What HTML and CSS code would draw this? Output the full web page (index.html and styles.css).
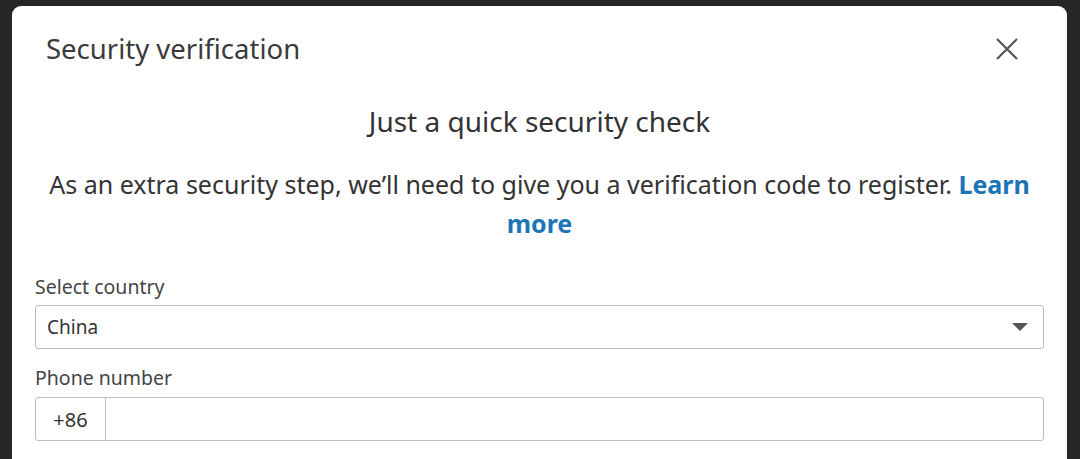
FILE: index.html
```html
<!DOCTYPE html>
<html lang="en">
<head>
<meta charset="utf-8">
<title>Security verification</title>
<link rel="stylesheet" href="styles.css">
</head>
<body>
<div class="dialog">
  <header class="dialog-header">
    <h1 class="dialog-title">Security verification</h1>
    <button class="close-btn" aria-label="Close">
      <svg width="24" height="24" viewBox="0 0 24 24"><path d="M2 2 L22 22 M22 2 L2 22" stroke="#555" stroke-width="2.2" fill="none"/></svg>
    </button>
  </header>
  <div class="dialog-body">
    <h2 class="subtitle">Just a quick security check</h2>
    <p class="intro">As an extra security step, we’ll need to give you a verification code to register. <a class="link" href="#">Learn more</a></p>
    <label class="field-label">Select country</label>
    <div class="select-box">
      <span class="select-value">China</span>
      <span class="caret"></span>
    </div>
    <label class="field-label">Phone number</label>
    <div class="phone-box">
      <span class="prefix">+86</span>
      <span class="phone-input"></span>
    </div>
  </div>
</div>
</body>
</html>
```

FILE: styles.css
```css
* { box-sizing: border-box; }
html, body {
  margin: 0;
  height: 100%;
  background: #262626;
  overflow: hidden;
}
body {
  padding: 6px 13px 0 12px;
  font-family: "Noto Sans", "Open Sans", sans-serif;
  color: #333;
}
.dialog {
  background: #fff;
  border-radius: 9px 9px 0 0;
  height: 470px;
}
.dialog-header {
  display: flex;
  justify-content: space-between;
  align-items: flex-start;
  padding: 24px 48px 0 34px;
  height: 72px;
}
.dialog-title {
  margin: 0;
  font-size: 27.5px;
  font-weight: 400;
  line-height: 38px;
  color: #3a3a3a;
}
.close-btn {
  border: 0;
  background: none;
  padding: 0;
  margin-top: 7px;
  width: 24px;
  height: 24px;
  display: flex;
}
.dialog-body {
  padding: 0 23px 0 23px;
}
.subtitle {
  margin: 25px 0 0;
  text-align: center;
  font-size: 28px;
  font-weight: 400;
  line-height: 36px;
  color: #333;
}
.intro {
  margin: 26px 0 0;
  text-align: center;
  font-size: 25px;
  line-height: 39px;
  color: #333;
}
.link {
  color: #1a74b6;
  font-weight: 700;
  text-decoration: none;
}
.field-label {
  display: block;
  margin-top: 32px;
  font-size: 19.5px;
  line-height: 24px;
  color: #444;
}
.select-box + .field-label { margin-top: 17px; }
.select-box {
  margin-top: 6px;
  height: 44px;
  border: 1.5px solid #bdbdbd;
  border-radius: 3px;
  display: flex;
  align-items: center;
  justify-content: space-between;
  padding: 0 15px 0 11px;
}
.select-value {
  font-size: 19px;
  color: #333;
}
.caret {
  width: 0;
  height: 0;
  border-left: 8px solid transparent;
  border-right: 8px solid transparent;
  border-top: 8px solid #555;
}
.phone-box {
  margin-top: 7px;
  height: 44px;
  border: 1.5px solid #bdbdbd;
  border-radius: 3px;
  display: flex;
}
.prefix {
  width: 70px;
  border-right: 1.5px solid #bdbdbd;
  display: flex;
  align-items: center;
  justify-content: center;
  font-size: 20px;
  color: #333;
}
.phone-input { flex: 1; }
```
